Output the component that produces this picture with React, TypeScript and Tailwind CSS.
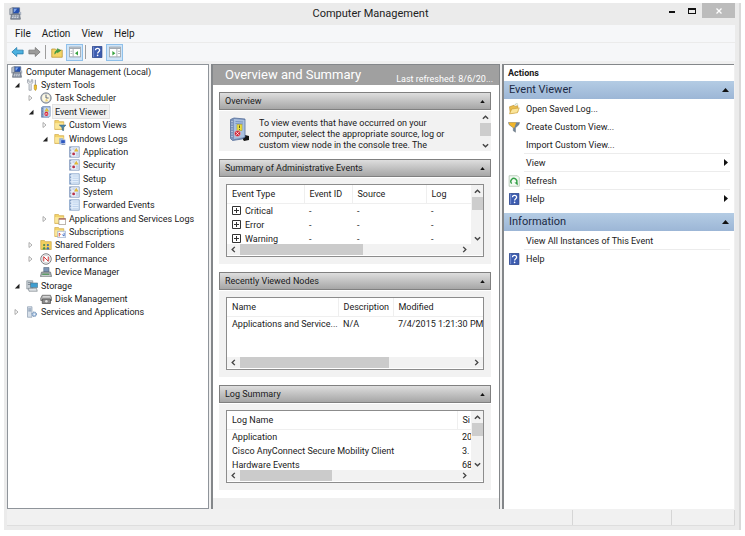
import type { ReactNode } from 'react';

type IconProps = { className?: string };

function Svg({ className = 'size-3', children }: IconProps & { children: ReactNode }) {
  return (
    <svg viewBox="0 0 16 16" className={'shrink-0 ' + className} fill="none" aria-hidden="true">
      {children}
    </svg>
  );
}

const ComputerIcon = ({ className }: IconProps) => (
  <Svg className={className}>
    <path d="M1 2l4-1.500v8L1 9.500z" fill="#b9c0ca" stroke="#6d7683" strokeWidth=".8" />
    <path d="M5 1h8v7H5z" fill="#2450b0" stroke="#5f6f8a" strokeWidth="1" />
    <path d="M6 2h4L7 6H6z" fill="#7fa5e8" />
    <path d="M12 6h3v4h-3z" fill="#a9b2c0" />
    <path d="M3 9h10l1 6H2z" fill="#8b95a5" stroke="#56606e" strokeWidth=".8" />
    <path d="M4 11h8M3.500 13h9" stroke="#e6eaf0" strokeDasharray="2 1" />
  </Svg>
);
const ToolsIcon = () => (
  <Svg>
    <path d="M2 1v4l2 2v8h3V7l2-2V1L7 1v3H4V1z" fill="#e3e6ea" stroke="#8b929b" strokeWidth=".9" />
    <path d="M12.500 1v7" stroke="#9aa1aa" strokeWidth="1.500" />
    <path d="M11 8h3v5l-1 2h-1l-1-2z" fill="#f0c22c" stroke="#b48a12" strokeWidth=".8" />
  </Svg>
);
const ClockIcon = () => (
  <Svg>
    <circle cx="8" cy="8" r="7" fill="#b3b9c2" stroke="#747c87" />
    <circle cx="8" cy="8" r="5.300" fill="#fdf8e2" />
    <path d="M8 8V3.500M8 8h3.500" stroke="#3f4e68" strokeWidth="1.100" />
    <path d="M8 8l3 4-4 1z" fill="#f0d27b" />
  </Svg>
);
const ViewerIcon = () => (
  <Svg>
    <path d="M2 2l2-1.500h9.500v13L12 15H2z" fill="#8ba5cd" stroke="#5b76a5" strokeWidth=".8" />
    <path d="M5 2h8v12H5z" fill="#c7d8ef" />
    <path d="M9 3l2.500 4h-5z" fill="#f4cf2c" stroke="#b18c10" strokeWidth=".5" />
    <circle cx="8.500" cy="10.500" r="2.700" fill="#d8293b" />
    <path d="M7.400 9.400l2.200 2.200m0-2.200l-2.200 2.200" stroke="#fff" strokeWidth=".8" />
    <path d="M3.300 3v11" stroke="#536b96" strokeDasharray="1 1" />
  </Svg>
);
const LogBookIcon = () => (
  <svg viewBox="0 0 22 25" className="h-[25px] w-[22px]" fill="none" aria-hidden="true">
    <path d="M13 21l3-3 4 1v4l-5 1z" fill="#151515" />
    <path d="M1.500 2.500L5 1l11 1v18l-3 2-9.500 1.500-2-2z" fill="#7d94bb" stroke="#566f9b" strokeWidth=".8" />
    <path d="M5 2l10.500 1v17L5 22z" fill="#a9c0df" />
    <path d="M6.500 4.500l7.500.5M6.500 6.500l7.500.5" stroke="#6c89b8" strokeWidth=".8" />
    <path d="M8 7.500h5v6H8z" fill="#ecdf3c" stroke="#b3a328" strokeWidth=".6" />
    <path d="M10.500 8.500v2.500M10.500 12v.8" stroke="#4d4a1b" strokeWidth=".9" />
    <circle cx="8.500" cy="16.500" r="3" fill="#cf2a3c" stroke="#f3c9cf" strokeWidth=".5" />
    <path d="M7.300 15.300l2.400 2.400m0-2.400l-2.400 2.400" stroke="#fff" strokeWidth=".9" />
    <path d="M3 4v17" stroke="#dfe7f3" strokeDasharray="1 1.500" />
  </svg>
);
const FolderBase = () => (
  <>
    <path d="M1 2h5l1 1.500h6V14H1z" fill="#f3d36b" stroke="#cda23c" strokeWidth=".8" />
    <path d="M1.500 5.500h11V13h-11z" fill="#fbe79b" />
  </>
);
const FilterFolderIcon = () => (
  <Svg>
    <FolderBase />
    <path d="M7 8h9l-3.300 3.500V16l-2-1.500v-3z" fill="#4f87a8" stroke="#2f5c78" strokeWidth=".6" />
  </Svg>
);
const LogsFolderIcon = () => (
  <Svg>
    <FolderBase />
    <path d="M7 7h5v8H7z" fill="#8faedb" />
    <path d="M9 9h6v5H9z" fill="#2c57c0" stroke="#dbe4f5" strokeWidth=".7" />
    <path d="M10 15.500h5" stroke="#50689a" />
  </Svg>
);
const ServicesFolderIcon = () => (
  <Svg>
    <FolderBase />
    <path d="M6.500 7.500h9v8h-9z" fill="#fff" stroke="#8d8178" strokeWidth=".9" />
    <path d="M6.500 8h9" stroke="#a44f48" strokeWidth="1.500" />
  </Svg>
);
const SubscriptionsIcon = () => (
  <Svg>
    <FolderBase />
    <path d="M5 7h10.500v8.500H5z" fill="#fff" stroke="#8aa2c8" strokeWidth=".9" />
    <path d="M7 14V9.500l2 2" stroke="#d8432e" strokeWidth="1.200" />
    <path d="M13.500 9v4.500l-2.500-2" stroke="#3568c4" strokeWidth="1.200" />
  </Svg>
);
const EventLogIcon = () => (
  <Svg>
    <path d="M2 1h13v14H2z" fill="#e9f0fa" stroke="#7d94b8" />
    <path d="M3.500 1.500v13" stroke="#6c83ab" strokeDasharray="1 1" strokeWidth="1.500" />
    <path d="M11 3l2.500 4h-5z" fill="#efc331" stroke="#b9921c" strokeWidth=".5" />
    <circle cx="7.500" cy="10.500" r="1.900" fill="#b93048" />
    <path d="M6 4h3M10.500 9.500H14M10.500 12H14" stroke="#9aaecd" />
  </Svg>
);
const PlainLogIcon = () => (
  <Svg>
    <path d="M2 1h13v14H2z" fill="#e3eefb" stroke="#7d9cc4" />
    <path d="M3.500 1.500v13" stroke="#5f80b0" strokeDasharray="1 1" strokeWidth="1.500" />
    <path d="M6 4h8M6 7h8M6 10h8M6 13h8" stroke="#b4cbe8" />
  </Svg>
);
const SharedIcon = () => (
  <Svg>
    <path d="M1 2h5l1 1.500h8V14H1z" fill="#f2cf5f" stroke="#c39a35" strokeWidth=".8" />
    <circle cx="5.500" cy="8" r="1.500" fill="#4f8a4c" />
    <circle cx="10.500" cy="8" r="1.500" fill="#416cae" />
    <path d="M3.500 14c0-4.500 4-4.500 4 0z" fill="#4c9148" />
    <path d="M8.500 14c0-4.500 4-4.500 4 0z" fill="#3d68ad" />
  </Svg>
);
const PerformanceIcon = () => (
  <Svg>
    <circle cx="8" cy="8" r="7" fill="#fff" stroke="#6e6e73" strokeWidth="1.200" />
    <circle cx="8" cy="8" r="5" stroke="#c5c5ca" />
    <path d="M5 11V5l6 6V5" stroke="#d23436" strokeWidth="1.300" />
  </Svg>
);
const DeviceIcon = () => (
  <Svg>
    <path d="M5 2h7v6H5z" fill="#7b94b4" stroke="#596a80" strokeWidth=".8" />
    <path d="M2 8h12l1.500 6h-15z" fill="#a3a9ac" stroke="#62686c" strokeWidth=".8" />
    <path d="M3 11h9" stroke="#4d9b58" strokeWidth="1.500" />
    <path d="M2 13h12" stroke="#e4e8ea" />
  </Svg>
);
const StorageIcon = () => (
  <Svg>
    <path d="M1 1h8v11H1z" fill="#c9d0d6" stroke="#7c8791" strokeWidth=".8" />
    <path d="M2.500 3.500h5M2.500 6h5" stroke="#6a7680" />
    <path d="M6 4h9.500v6H6z" fill="#3f9ed0" stroke="#53707f" strokeWidth=".8" />
    <path d="M3 11h11l1 4H4z" fill="#dde2e5" stroke="#6d777e" strokeWidth=".8" />
  </Svg>
);
const DiskIcon = () => (
  <Svg>
    <path d="M3 3h11l1.500 4v3H1V7z" fill="#b5b5b5" stroke="#555" strokeWidth=".9" />
    <path d="M3 8h11v6H3z" fill="#8b8b8b" stroke="#444" strokeWidth=".9" />
    <path d="M4 5h9" stroke="#eee" />
    <circle cx="8.500" cy="11" r="1.700" fill="#e4e4e4" />
  </Svg>
);
const ServicesIcon = () => (
  <Svg>
    <path d="M2 1h6v14H2z" fill="#d7e0ea" stroke="#7d90a6" strokeWidth=".8" />
    <path d="M3 4h4M3 6.500h4" stroke="#5b7391" />
    <circle cx="11" cy="11" r="3" fill="#a9c3e0" stroke="#5d80aa" strokeWidth="1.200" strokeDasharray="1.500 .7" />
    <circle cx="11" cy="11" r="1" fill="#fff" />
  </Svg>
);
const HelpIcon = () => (
  <Svg>
    <path d="M2 .5h12.500v15H2z" fill="#3c5cb0" stroke="#233d85" />
    <path d="M3.500 1v14" stroke="#8ba2dc" />
    <path d="M6 5.500c0-3.500 5.500-3 5.500 0C11.500 7.500 8.800 7.700 8.800 10" stroke="#fff" strokeWidth="1.700" />
    <circle cx="8.800" cy="12.500" r="1.100" fill="#fff" />
  </Svg>
);
const OpenFolderIcon = () => (
  <Svg>
    <path d="M2 5l6-2 1 1.500 4-1V12l-10 2z" fill="#e9bd4c" stroke="#bb8c28" strokeWidth=".8" />
    <path d="M5 8l10-1.500L12.500 13 2 14.500z" fill="#fbe59a" stroke="#c89a35" strokeWidth=".8" />
    <path d="M9 3c1-2.500 3-2.500 4.500-1" stroke="#9ab7a0" />
  </Svg>
);
const FunnelIcon = () => (
  <Svg>
    <path d="M.5 2h15l-1 3-4.500 4v6L7 13V9L1.500 5z" fill="#6d8296" stroke="#6b7278" strokeWidth=".6" />
    <path d="M1 2h10L8.500 9H7L2 5z" fill="#f1b52a" />
  </Svg>
);
const RefreshIcon = () => (
  <Svg>
    <path d="M1.500 1h11L15 3.500V15H1.500z" fill="#f4fbf4" stroke="#a8bfa9" />
    <path d="M5 11.500A4 4 0 1 1 11 11" stroke="#37a14a" strokeWidth="1.800" />
    <path d="M8.500 10h4.500v4z" fill="#37a14a" />
  </Svg>
);
const ArrowIcon = ({ back = false }: { back?: boolean }) => (
  <Svg className="h-3 w-[13px]">
    {back ? (
      <path d="M.5 8L7 2v3.500h8.500v5H7V14z" fill="#4db1e0" stroke="#227aa9" />
    ) : (
      <path d="M15.500 8L9 2v3.500H.5v5H9V14z" fill="#9b9b9b" stroke="#737373" />
    )}
  </Svg>
);
const UpFolderIcon = () => (
  <Svg>
    <path d="M1 4h5l1.500 1.500H15V15H1z" fill="#f3d465" stroke="#b99331" />
    <path d="M5 11c0-3 1-5 3.500-5.500V3.500L13 6 8.500 9V7.500" fill="#42a047" stroke="#2f8637" strokeWidth=".8" />
  </Svg>
);
const PaneIcon = ({ right = false }: { right?: boolean }) => (
  <Svg>
    <path d="M.5 1.500h15v13H.5z" fill="#fff" stroke="#858c94" />
    <path d="M1 3h14" stroke="#a2aab3" strokeWidth="2" />
    <path d={right ? 'M10.500 4v10' : 'M5.500 4v10'} stroke="#8f969e" />
    <path d={right ? 'M4.500 6.500v6L8.500 9.500z' : 'M12 6.500v6L8 9.500z'} fill="#35a23d" />
    <path d={right ? 'M12 7h3M12 10h3' : 'M2 7h2.500M2 10h2.500'} stroke="#9aa1a8" />
  </Svg>
);

type TreeNode = { level: number; label: string; icon: ReactNode; state?: 'open' | 'closed'; selected?: boolean };

const tree: TreeNode[] = [
  { level: 0, label: 'Computer Management (Local)', icon: <ComputerIcon /> },
  { level: 1, label: 'System Tools', icon: <ToolsIcon />, state: 'open' },
  { level: 2, label: 'Task Scheduler', icon: <ClockIcon />, state: 'closed' },
  { level: 2, label: 'Event Viewer', icon: <ViewerIcon />, state: 'open', selected: true },
  { level: 3, label: 'Custom Views', icon: <FilterFolderIcon />, state: 'closed' },
  { level: 3, label: 'Windows Logs', icon: <LogsFolderIcon />, state: 'open' },
  { level: 4, label: 'Application', icon: <EventLogIcon /> },
  { level: 4, label: 'Security', icon: <EventLogIcon /> },
  { level: 4, label: 'Setup', icon: <PlainLogIcon /> },
  { level: 4, label: 'System', icon: <EventLogIcon /> },
  { level: 4, label: 'Forwarded Events', icon: <PlainLogIcon /> },
  { level: 3, label: 'Applications and Services Logs', icon: <ServicesFolderIcon />, state: 'closed' },
  { level: 3, label: 'Subscriptions', icon: <SubscriptionsIcon /> },
  { level: 2, label: 'Shared Folders', icon: <SharedIcon />, state: 'closed' },
  { level: 2, label: 'Performance', icon: <PerformanceIcon />, state: 'closed' },
  { level: 2, label: 'Device Manager', icon: <DeviceIcon /> },
  { level: 1, label: 'Storage', icon: <StorageIcon />, state: 'open' },
  { level: 2, label: 'Disk Management', icon: <DiskIcon /> },
  { level: 1, label: 'Services and Applications', icon: <ServicesIcon />, state: 'closed' },
];

const indent = ['pl-[3px]', 'pl-[6px]', 'pl-[20px]', 'pl-[34px]', 'pl-[48px]'];

function TreeRow({ node }: { node: TreeNode }) {
  return (
    <li className={'flex items-center ' + indent[node.level]}>
      {node.level > 0 && (
        <span className="flex w-3 shrink-0 items-center">
          {node.state && (
            <button aria-label={'Toggle ' + node.label} className="block">
              <svg viewBox="0 0 6 6" className="size-[6px]" aria-hidden="true">
                {node.state === 'open' ? (
                  <path d="M5.500 .8v4.700H.8z" fill="#222" />
                ) : (
                  <path d="M1 .5L4 3 1 5.500z" fill="#fff" stroke="#999" strokeWidth=".8" />
                )}
              </svg>
            </button>
          )}
        </span>
      )}
      {node.icon}
      <button
        className={
          'ml-px h-[13px] px-[2px] leading-3 whitespace-nowrap ' + (node.selected ? 'bg-[#f2f2f2] outline outline-[#e2e2e2]' : '')
        }
      >
        {node.label}
      </button>
    </li>
  );
}

function Chevron({ dir }: { dir: 'up' | 'down' | 'left' | 'right' }) {
  const paths = { up: 'M1 5.500L4 2.500l3 3', down: 'M1 2.500l3 3 3-3', left: 'M5.500 1L2.500 4l3 3', right: 'M2.500 1l3 3-3 3' };
  return (
    <svg viewBox="0 0 8 8" className="size-[7px] shrink-0" fill="none" aria-hidden="true">
      <path d={paths[dir]} stroke="#444" strokeWidth="1.600" />
    </svg>
  );
}

function VScroll() {
  return (
    <div className="flex w-3 shrink-0 flex-col items-center bg-[#f2f2f2]">
      <button aria-label="Scroll up" className="flex h-3 items-center">
        <Chevron dir="up" />
      </button>
      <div className="h-[13px] w-[11px] bg-[#cdcdcd]" />
      <button aria-label="Scroll down" className="mt-auto flex h-3 items-center">
        <Chevron dir="down" />
      </button>
    </div>
  );
}

function HScroll({ thumb, corner }: { thumb: string; corner: boolean }) {
  return (
    <div className={'flex h-[11px] items-center bg-[#f2f2f2] pl-[3px] ' + (corner ? 'pr-[15px]' : 'pr-[3px]')}>
      <button aria-label="Scroll left" className="flex w-[10px]">
        <Chevron dir="left" />
      </button>
      <div className={'h-[11px] bg-[#cbcbcb] ' + thumb} />
      <button aria-label="Scroll right" className="ml-auto">
        <Chevron dir="right" />
      </button>
    </div>
  );
}

function ListBox({
  cols,
  head,
  rows,
  thumb,
  scroll = false,
  expandable = false,
}: {
  cols: string[];
  head: string[];
  rows: string[][];
  thumb: string;
  scroll?: boolean;
  expandable?: boolean;
}) {
  return (
    <div className="border border-[#8c8c8c] bg-white pb-px">
      <div className="flex h-[59px]">
        <div className="min-w-0 flex-1 overflow-hidden">
          <table className="w-full table-fixed border-collapse text-left">
            <colgroup>
              {cols.map((c, i) => (
                <col key={i} className={c} />
              ))}
            </colgroup>
            <thead>
              <tr className="h-[18px]">
                {head.map((h) => (
                  <th
                    key={h}
                    className="border-r border-b border-[#efefef] p-0 pl-[5px] leading-3 font-normal whitespace-nowrap last:border-r-0"
                  >
                    {h}
                  </th>
                ))}
              </tr>
            </thead>
            <tbody>
              {rows.map((row) => (
                <tr key={row[0]} className="h-[14px]">
                  {row.map((cell, i) => (
                    <td key={i} className="p-0 pl-[5px] leading-[14px] whitespace-nowrap">
                      {expandable && i === 0 ? (
                        <span className="flex items-center gap-1">
                          <button aria-label={'Expand ' + cell}>
                            <svg viewBox="0 0 9 9" className="block size-[9px]" fill="none" stroke="#333" aria-hidden="true">
                              <path d="M.5 .5h8v8h-8zM2 4.500h5M4.500 2v5" />
                            </svg>
                          </button>
                          {cell}
                        </span>
                      ) : (
                        cell
                      )}
                    </td>
                  ))}
                </tr>
              ))}
            </tbody>
          </table>
        </div>
        {scroll && <VScroll />}
      </div>
      <HScroll thumb={thumb} corner={scroll} />
    </div>
  );
}

function Section({ title, padded = true, children }: { title: string; padded?: boolean; children: ReactNode }) {
  return (
    <section className="flex flex-col gap-px">
      <button className="flex h-[18px] w-full items-center justify-between border border-[#808080] bg-linear-to-b from-[#dedede] to-[#a6a6a6] px-[5px]">
        <span className="leading-3">{title}</span>
        <svg viewBox="0 0 6 4" className="h-[3px] w-[5px]" aria-hidden="true">
          <path d="M0 4l3-4 3 4z" fill="#111" />
        </svg>
      </button>
      <div className={'bg-[#f2f2f2] ' + (padded ? 'px-[7px] pt-[6px] pb-[7px]' : '')}>{children}</div>
    </section>
  );
}

function ActionGroup({ title }: { title: string }) {
  return (
    <button className="flex h-[18px] w-full items-center justify-between bg-linear-to-b from-[#b4cce4] to-[#9cb6d6] px-[5px] text-[11px] text-[#1c2a44]">
      <span className="leading-4">{title}</span>
      <svg viewBox="0 0 7 4" className="h-1 w-[7px]" aria-hidden="true">
        <path d="M0 4l3.500-4L7 4z" fill="#111" />
      </svg>
    </button>
  );
}

function ActionItem({ label, icon, submenu = false, line = false }: { label: string; icon?: ReactNode; submenu?: boolean; line?: boolean }) {
  return (
    <li className={'mr-1 ml-5 ' + (line ? 'border-t border-[#ececec]' : 'border-t border-transparent')}>
      <button className="-ml-4 flex h-[17px] w-[calc(100%+16px)] items-center text-left">
        <span className="flex w-[18px] shrink-0">{icon}</span>
        <span className="flex-1 leading-3">{label}</span>
        {submenu && (
          <svg viewBox="0 0 4 7" className="mr-[2px] h-[7px] w-1" aria-hidden="true">
            <path d="M0 0l4 3.500L0 7z" fill="#111" />
          </svg>
        )}
      </button>
    </li>
  );
}

const pressed = 'flex h-[17px] w-[17px] items-center justify-center border border-[#8fc0ea] bg-[#cfe4f7]';

export default function App() {
  return (
    <div className="flex min-h-screen bg-white pt-[3px] pr-1 pb-[6px] pl-1 font-[Roboto,'Noto_Sans',sans-serif] text-[9px] text-[#1a1a1a]">
      <div className="flex min-w-0 flex-1 flex-col border-r-2 border-[#d9d9d9] bg-[#ebebeb] pr-1 pb-1 pl-[3px]">
        <header className="flex h-[22px] shrink-0 items-start">
          <div className="flex w-[72px] pt-1 pl-[2px]">
            <ComputerIcon className="size-[13px]" />
          </div>
          <h1 className="flex-1 pt-[3px] text-center text-[11px] leading-4 text-[#222]">Computer Management</h1>
          <div className="flex">
            <button aria-label="Minimize" className="flex h-[15px] w-5 items-center justify-center pt-[3px]">
              <span className="h-[2px] w-[6px] bg-[#111]" />
            </button>
            <button aria-label="Maximize" className="flex h-[15px] w-5 items-center justify-center">
              <span className="h-[6px] w-2 border border-t-2 border-[#111]" />
            </button>
            <button aria-label="Close" className="flex h-[15px] w-[33px] items-center justify-center bg-[#bcbcbc]">
              <svg viewBox="0 0 6 6" className="size-[6px]" aria-hidden="true">
                <path d="M.5 .5l5 5m0-5l-5 5" stroke="#fff" strokeWidth="1.300" />
              </svg>
            </button>
          </div>
        </header>

        <nav className="flex h-[17px] shrink-0 items-center gap-[11px] bg-[#f6f7f9] pl-2 text-[10px]">
          <button className="leading-3">File</button>
          <button className="leading-3">Action</button>
          <button className="leading-3">View</button>
          <button className="leading-3">Help</button>
        </nav>
        <div className="mt-px flex h-[18px] shrink-0 items-center bg-[#f6f7f9] pl-1">
          <button aria-label="Back">
            <ArrowIcon back />
          </button>
          <button aria-label="Forward" className="ml-1">
            <ArrowIcon />
          </button>
          <span className="mr-[2px] ml-1 h-[14px] w-px bg-[#9d9d9d]" />
          <button aria-label="Up one level" className="mx-[3px]">
            <UpFolderIcon />
          </button>
          <button aria-label="Show or hide console tree" className={pressed}>
            <PaneIcon />
          </button>
          <span className="mx-[2px] h-[14px] w-px bg-[#9d9d9d]" />
          <button aria-label="Help" className="mx-[3px]">
            <HelpIcon />
          </button>
          <button aria-label="Show or hide action pane" className={pressed}>
            <PaneIcon right />
          </button>
        </div>

        <main className="flex flex-1 gap-[2px] bg-[#f0f0f0] pt-[3px] pr-px">
          <nav aria-label="Console tree" className="w-[202px] shrink-0 border border-[#8f949a] bg-white">
            <ul className="grid h-[254px] auto-rows-fr">
              {tree.map((n, i) => (
                <TreeRow key={i} node={n} />
              ))}
            </ul>
          </nav>

          <div className="flex min-w-0 flex-1 flex-col border-t border-r border-l-2 border-[#84878a] bg-[#f0f0f0]">
            <div className="flex h-5 items-end justify-between bg-[#a0a0a0] pr-[6px] pl-3 text-white">
              <h2 className="text-[13px] leading-5 whitespace-nowrap">Overview and Summary</h2>
              <span className="leading-3 whitespace-nowrap">Last refreshed: 8/6/20...</span>
            </div>
            <div className="flex flex-col gap-2 bg-white pt-[7px] pr-2 pb-2 pl-[6px]">
              <Section title="Overview" padded={false}>
                <div className="flex h-10">
                  <div className="w-10 shrink-0 pt-[6px] pl-[10px]">
                    <LogBookIcon />
                  </div>
                  <p className="min-w-0 flex-1 overflow-hidden pt-[7px] leading-[11px]">
                    To view events that have occurred on your
                    <br />
                    computer, select the appropriate source, log or
                    <br />
                    custom view node in the console tree. The
                  </p>
                  <VScroll />
                </div>
              </Section>
              <Section title="Summary of Administrative Events">
                <ListBox
                  scroll
                  expandable
                  cols={['w-[77px]', 'w-[48px]', 'w-[74px]', '']}
                  head={['Event Type', 'Event ID', 'Source', 'Log']}
                  rows={[
                    ['Critical', '-', '-', '-'],
                    ['Error', '-', '-', '-'],
                    ['Warning', '-', '-', '-'],
                  ]}
                  thumb="w-[123px]"
                />
              </Section>
              <Section title="Recently Viewed Nodes">
                <ListBox
                  cols={['w-[111px]', 'w-[55px]', '']}
                  head={['Name', 'Description', 'Modified']}
                  rows={[['Applications and Service...', 'N/A', '7/4/2015 1:21:30 PM']]}
                  thumb="w-[149px]"
                />
              </Section>
              <Section title="Log Summary">
                <ListBox
                  scroll
                  cols={['w-[230px]', '']}
                  head={['Log Name', 'Si']}
                  rows={[
                    ['Application', '20'],
                    ['Cisco AnyConnect Secure Mobility Client', '3.'],
                    ['Hardware Events', '68'],
                  ]}
                  thumb="w-[92px]"
                />
              </Section>
            </div>
          </div>

          <aside className="w-[232px] shrink-0 border-t border-l-2 border-[#84878a] bg-white">
            <h2 className="h-4 pl-1 leading-4 font-bold">Actions</h2>
            <ActionGroup title="Event Viewer" />
            <ul>
              <ActionItem label="Open Saved Log..." icon={<OpenFolderIcon />} />
              <ActionItem label="Create Custom View..." icon={<FunnelIcon />} />
              <ActionItem label="Import Custom View..." />
              <ActionItem label="View" submenu line />
              <ActionItem label="Refresh" icon={<RefreshIcon />} line />
              <ActionItem label="Help" icon={<HelpIcon />} submenu line />
            </ul>
            <div className="mt-[6px]">
              <ActionGroup title="Information" />
            </div>
            <ul>
              <ActionItem label="View All Instances of This Event" />
              <ActionItem label="Help" icon={<HelpIcon />} line />
            </ul>
          </aside>
        </main>

        <footer className="flex h-[17px] shrink-0 justify-end border-b border-[#dedede] bg-[#f1f1f1] pt-px">
          <span className="w-[99px] border-l border-[#d6d6d6]" />
          <span className="w-16 border-x border-[#d6d6d6]" />
        </footer>
      </div>
    </div>
  );
}
